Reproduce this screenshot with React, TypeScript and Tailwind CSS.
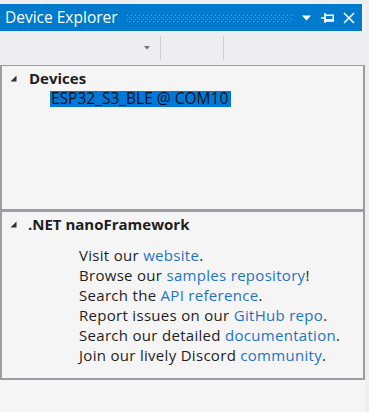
import { FC } from "react";

const links: { pre: string; link: string; post: string }[] = [
  { pre: "Visit our ", link: "website", post: "." },
  { pre: "Browse our ", link: "samples repository", post: "!" },
  { pre: "Search the ", link: "API reference", post: "." },
  { pre: "Report issues on our ", link: "GitHub repo", post: "." },
  { pre: "Search our detailed ", link: "documentation", post: "." },
  { pre: "Join our lively Discord ", link: "community", post: "." },
];

const Expanded: FC = () => (
  <svg width="7" height="7" viewBox="0 0 7 7" className="shrink-0">
    <polygon points="6.5,0.5 6.5,6.5 0.5,6.5" fill="#333337" />
  </svg>
);

const App: FC = () => {
  return (
    <div className="w-[369px] h-[412px] flex overflow-hidden bg-[#f5f5f5] font-['Open_Sans',sans-serif] text-[#1e1e1e]">
      <div className="w-[365px] flex flex-col">
        <div className="h-[4px] bg-[#eeeef2]" />
        {/* title bar */}
        <div className="h-[27px] mr-[3px] bg-[#007acc] flex items-center text-white">
          <span className="pl-[5px] text-[15.5px] leading-none whitespace-nowrap">Device Explorer</span>
          <div className="flex-1 min-w-0 ml-[9px] mr-[10px] h-[7px] mt-[1px]">
            <svg width="100%" height="7">
              <defs>
                <pattern id="grip" width="4" height="4" patternUnits="userSpaceOnUse">
                  <rect x="0" y="0" width="1" height="1" fill="#5aa6dc" />
                  <rect x="2" y="2" width="1" height="1" fill="#5aa6dc" />
                </pattern>
              </defs>
              <rect width="100%" height="7" fill="url(#grip)" />
            </svg>
          </div>
          <div className="flex items-center shrink-0 mr-[7px]">
            <svg width="9" height="6" viewBox="0 0 9 6">
              <polygon points="0,0.5 9,0.5 4.5,5.5" fill="white" />
            </svg>
            <svg width="13" height="12" viewBox="0 0 13 12" className="ml-[10px]">
              <line x1="0" y1="6" x2="3.5" y2="6" stroke="white" strokeWidth="1.5" />
              <line x1="4" y1="1" x2="4" y2="11" stroke="white" strokeWidth="1.5" />
              <rect x="4" y="3.2" width="8.2" height="5.6" fill="none" stroke="white" strokeWidth="1.5" />
              <rect x="4" y="7" width="8.9" height="2.5" fill="white" />
            </svg>
            <svg width="12" height="12" viewBox="0 0 12 12" className="ml-[9px]">
              <line x1="1" y1="1" x2="11" y2="11" stroke="white" strokeWidth="1.6" />
              <line x1="11" y1="1" x2="1" y2="11" stroke="white" strokeWidth="1.6" />
            </svg>
          </div>
        </div>
        {/* toolbar */}
        <div className="h-[34px] bg-[#eeeef2] flex items-center">
          <div className="w-[160px] h-[24px] flex items-center justify-end pr-[10px]">
            <svg width="6" height="4" viewBox="0 0 6 4">
              <polygon points="0,0 6,0 3,3.5" fill="#717171" />
            </svg>
          </div>
          <div className="w-px h-[24px] bg-[#ccced8]" />
          <div className="w-[62px]" />
          <div className="w-px h-[24px] bg-[#ccced8]" />
        </div>
        {/* devices panel */}
        <div className="h-[146px] border-2 border-t border-[#9b9da5] bg-[#f5f5f5] pt-[3px]">
          <div className="h-[18px] flex items-center pl-[8px] gap-[12px]">
            <Expanded />
            <span className="text-[15px] font-bold leading-none">Devices</span>
          </div>
          <div className="mt-[4px] ml-[48px] w-[181px] h-[16px] bg-[#0078d7] flex items-center">
            <span className="pl-[1px] text-[15.5px] leading-none text-[#111] whitespace-nowrap">
              ESP32_S3_BLE @ COM10
            </span>
          </div>
        </div>
        {/* nanoFramework panel */}
        <div className="h-[169px] border-2 border-t border-[#9b9da5] bg-[#f5f5f5] pt-[3px]">
          <div className="h-[18px] flex items-center pl-[8px] gap-[11px]">
            <Expanded />
            <span className="text-[15px] font-bold leading-none">.NET nanoFramework</span>
          </div>
          <ul className="mt-[12px] pl-[77px] text-[15px] leading-[20px] tracking-[0.3px]">
            {links.map((l, i) => (
              <li key={i}>
                {l.pre}
                <span className="text-[#1c74c9]">{l.link}</span>
                {l.post}
              </li>
            ))}
          </ul>
        </div>
      </div>
      <div className="flex-1 bg-[#eeeef2]" />
    </div>
  );
};

export default App;
